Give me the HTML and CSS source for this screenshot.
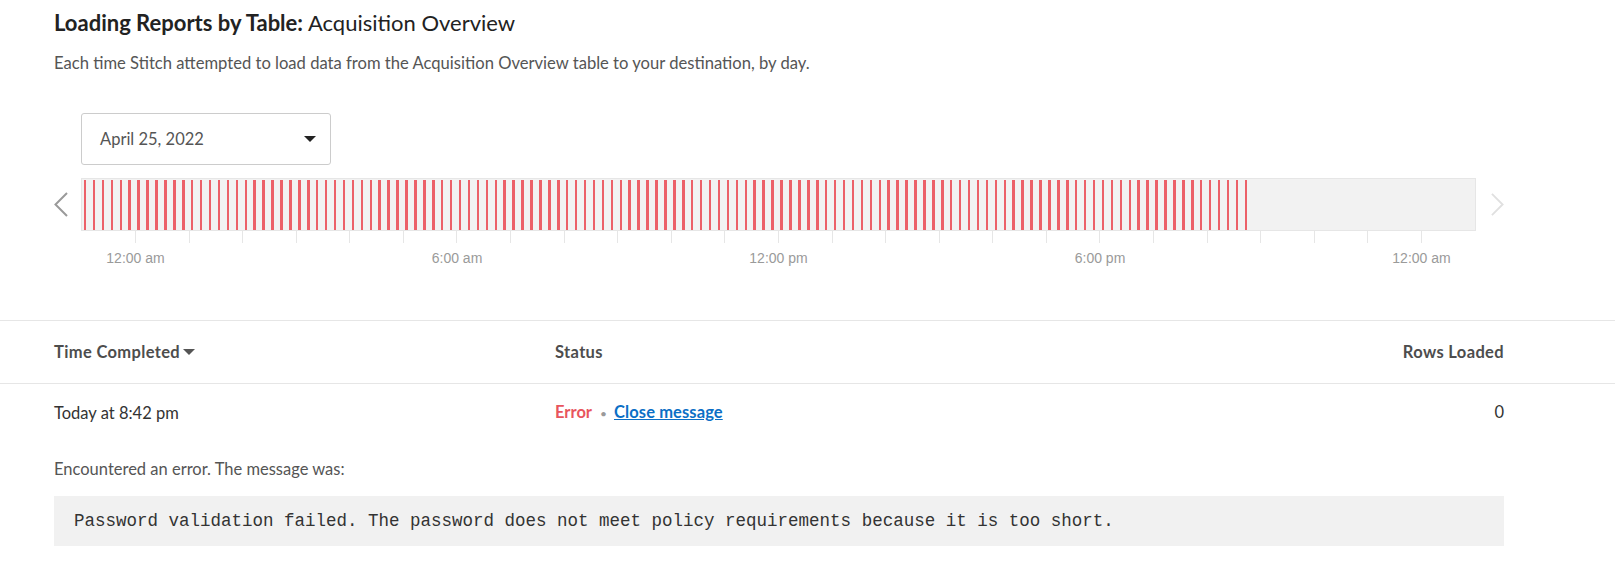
FILE: index.html
```html
<!DOCTYPE html>
<html lang="en">
<head>
<meta charset="utf-8">
<title>Loading Reports by Table: Acquisition Overview</title>
<link rel="stylesheet" href="styles.css">
</head>
<body>
<main class="page">
  <section class="intro">
    <h2 class="title"><strong>Loading Reports by Table:</strong> Acquisition Overview</h2>
    <p class="subtitle">Each time Stitch attempted to load data from the Acquisition Overview table to your destination, by day.</p>
    <button class="date-picker" type="button">
      <span class="date-value">April 25, 2022</span>
      <span class="caret"></span>
    </button>
    <div class="timeline">
      <button class="nav nav-prev" type="button" aria-label="Previous day">
        <svg width="14" height="25" viewBox="0 0 14 25"><polyline points="13,1 1.5,12.5 13,24" fill="none" stroke="#9a9a9a" stroke-width="2"/></svg>
      </button>
      <div class="chart-col">
        <div class="chart" id="chart"></div>
        <div class="ticks">
          <span class="tick"></span><span class="tick"></span><span class="tick"></span><span class="tick"></span><span class="tick"></span>
          <span class="tick"></span><span class="tick"></span><span class="tick"></span><span class="tick"></span><span class="tick"></span>
          <span class="tick"></span><span class="tick"></span><span class="tick"></span><span class="tick"></span><span class="tick"></span>
          <span class="tick"></span><span class="tick"></span><span class="tick"></span><span class="tick"></span><span class="tick"></span>
          <span class="tick"></span><span class="tick"></span><span class="tick"></span><span class="tick"></span><span class="tick"></span>
        </div>
        <div class="labels">
          <span class="label"><span>12:00 am</span></span>
          <span class="label"><span>6:00 am</span></span>
          <span class="label"><span>12:00 pm</span></span>
          <span class="label"><span>6:00 pm</span></span>
          <span class="label"><span>12:00 am</span></span>
        </div>
      </div>
      <button class="nav nav-next" type="button" aria-label="Next day" disabled>
        <svg width="14" height="25" viewBox="0 0 14 25"><polyline points="1,1 12.5,12.5 1,24" fill="none" stroke="#e0e0e0" stroke-width="2"/></svg>
      </button>
    </div>
  </section>

  <section class="loads">
    <div class="row row-head">
      <span class="col-time">Time Completed<span class="sort-caret"></span></span>
      <span class="col-status">Status</span>
      <span class="col-rows">Rows Loaded</span>
    </div>
    <div class="row row-data">
      <span class="col-time">Today at 8:42 pm</span>
      <span class="col-status"><span class="status-error">Error</span><span class="sep">•</span><a class="close-link" href="#">Close message</a></span>
      <span class="col-rows">0</span>
    </div>
    <div class="details">
      <p class="details-intro">Encountered an error. The message was:</p>
      <pre class="details-message">Password validation failed. The password does not meet policy requirements because it is too short.</pre>
    </div>
  </section>
</main>
<script src="script.js"></script>
</body>
</html>
```

FILE: styles.css
```css
* {
  box-sizing: border-box;
}

html, body {
  margin: 0;
  padding: 0;
  background: #ffffff;
}

body {
  font-family: Lato, "Noto Sans", sans-serif;
  font-size: 16.5px;
  color: #333333;
}

.intro {
  padding: 10px 111px 0 54px;
}

.title {
  margin: 0;
  font-size: 22px;
  line-height: 26px;
  font-weight: 400;
  color: #222222;
}

.title strong {
  font-weight: 700;
}

.subtitle {
  margin: 17px 0 0;
  font-size: 16.6px;
  line-height: 20px;
  color: #555555;
}

.date-picker {
  margin: 40px 0 0 27px;
  width: 250px;
  height: 52px;
  padding: 0 14px 0 18px;
  display: flex;
  align-items: center;
  justify-content: space-between;
  background: #ffffff;
  border: 1px solid #cccccc;
  border-radius: 3px;
  font-family: inherit;
  font-size: 16.5px;
  color: #555555;
  cursor: pointer;
}

.caret {
  width: 0;
  height: 0;
  border-left: 6px solid transparent;
  border-right: 6px solid transparent;
  border-top: 6px solid #222222;
}

.timeline {
  margin-top: 13px;
  display: grid;
  grid-template-columns: 27px 1395px 28px;
  align-items: start;
}

.nav {
  margin: 0;
  padding: 0;
  height: 53px;
  border: 0;
  background: transparent;
  display: flex;
  align-items: center;
  cursor: pointer;
}

.nav svg {
  display: block;
}

.nav-prev {
  justify-content: flex-start;
}

.nav-next {
  justify-content: flex-start;
  padding-left: 15px;
  cursor: default;
}

.chart {
  position: relative;
  height: 53px;
  border: 1px solid #e6e6e6;
  background: #f2f2f2;
}

.bar {
  position: absolute;
  top: 1px;
  bottom: 0;
  width: 2.5px;
  background: #ec6068;
}

.ticks {
  height: 12px;
  padding: 0 54px;
  display: flex;
  justify-content: space-between;
}

.tick {
  width: 1px;
  height: 12px;
  background: #e6e6e6;
}

.labels {
  margin-top: 7px;
  height: 16px;
  padding: 0 54.5px;
  display: flex;
  justify-content: space-between;
  font-family: "Liberation Sans", Arial, sans-serif;
  font-size: 14px;
  line-height: 16px;
  color: #9a9a9a;
}

.label {
  width: 0;
  display: flex;
  justify-content: center;
  white-space: nowrap;
}

.loads {
  margin-top: 54px;
  border-top: 1px solid #e6e6e6;
}

.row {
  display: grid;
  grid-template-columns: 501px 1fr auto;
  padding: 0 111px 0 54px;
  line-height: 20px;
}

.row-head {
  padding-top: 21px;
  padding-bottom: 21px;
  border-bottom: 1px solid #e6e6e6;
  font-weight: 700;
  letter-spacing: 0.35px;
  color: #4d4d4d;
}

.row-data {
  padding-top: 18px;
  color: #333333;
}

.col-time {
  display: flex;
  align-items: center;
}

.sort-caret {
  margin-left: 3px;
  width: 0;
  height: 0;
  border-left: 6.5px solid transparent;
  border-right: 6.5px solid transparent;
  border-top: 6px solid #555555;
}

.col-rows {
  text-align: right;
}

.status-error {
  font-weight: 700;
  color: #e8555d;
}

.sep {
  margin: 0 7px 0 8px;
  color: #9a9a9a;
  font-size: 12px;
}

.close-link {
  font-weight: 700;
  letter-spacing: 0.1px;
  color: #0b6fc6;
  text-decoration: underline;
}

.details {
  padding: 35px 111px 28px 54px;
}

.details-intro {
  margin: 0;
  line-height: 20px;
  color: #555555;
}

.details-message {
  margin: 17px 0 0;
  padding: 15px 20px;
  background: #f1f1f1;
  font-family: "Liberation Mono", "Courier New", monospace;
  font-size: 17.5px;
  line-height: 20px;
  color: #333333;
  white-space: pre-wrap;
}
```

FILE: script.js
```js
(function () {
  var chart = document.getElementById('chart');
  var windowStart = -60;   // minutes: 11:00 pm the day before
  var windowSpan = 26 * 60; // 26 hour window
  for (var m = -58; m <= 1242; m += 10) {
    var bar = document.createElement('span');
    bar.className = 'bar';
    bar.style.left = ((m - windowStart) / windowSpan * 100) + '%';
    chart.appendChild(bar);
  }
})();
```
